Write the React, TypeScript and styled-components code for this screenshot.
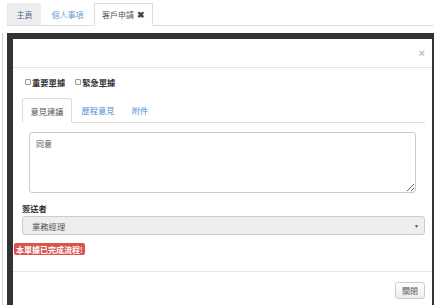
import React from "react";
import styled, { createGlobalStyle, css } from "styled-components";

const GlobalStyle = createGlobalStyle`
  html, body {
    margin: 0;
    padding: 0;
    background: #fff;
  }
  body {
    font-family: "Liberation Sans", "Noto Sans CJK TC", sans-serif;
    color: #333;
  }
`;

const Page = styled.div`
  width: 434px;
  height: 305px;
  overflow: hidden;
  display: flex;
  flex-direction: column;
`;

const TabBar = styled.ul`
  display: flex;
  margin: 3px 0 0 7px;
  padding: 0;
  list-style: none;
  height: 22px;
  border-bottom: 1px solid #ddd;
`;

const Tab = styled.li<{ $w: number; $kind: "home" | "link" | "active" }>`
  width: ${(p) => p.$w}px;
  box-sizing: border-box;
  display: flex;
  align-items: center;
  justify-content: center;
  gap: 3px;
  font-size: 8px;
  ${(p) =>
    p.$kind === "home" &&
    css`
      background: #eee;
      color: #4d6b8c;
      border-left: 1px solid #e6e6e6;
    `}
  ${(p) =>
    p.$kind === "link" &&
    css`
      color: #6a9fd8;
    `}
  ${(p) =>
    p.$kind === "active" &&
    css`
      color: #555;
      background: #fff;
      border: 1px solid #ddd;
      border-bottom-color: #fff;
      height: 23px;
    `}
`;

const CloseMark = styled.span`
  font-size: 9px;
  font-weight: bold;
  color: #444;
`;

const Stage = styled.div`
  flex: 1;
  margin: 7px 0 0 2px;
  border-left: 1px solid #d0d0d0;
  padding-left: 4px;
  display: flex;
`;

const Backdrop = styled.div`
  flex: 1;
  background: #333;
  padding: 6px 2px 0 6px;
  display: flex;
`;

const Modal = styled.div`
  flex: 1;
  background: #fff;
  display: flex;
  flex-direction: column;
`;

const ModalHeader = styled.div`
  height: 28px;
  border-bottom: 1px solid #e5e5e5;
  display: flex;
  justify-content: flex-end;
  align-items: center;
  padding-right: 7px;
`;

const Dismiss = styled.span`
  font-size: 11px;
  color: #bbb;
  font-weight: bold;
  line-height: 1;
`;

const ModalBody = styled.div`
  padding: 0 7px 0 9px;
  display: flex;
  flex-direction: column;
`;

const CheckRow = styled.div`
  display: flex;
  align-items: center;
  height: 12px;
  margin: 8px 0 0 3px;
  gap: 10px;
`;

const CheckLabel = styled.label`
  display: flex;
  align-items: center;
  gap: 1px;
  font-size: 8.3px;
  font-weight: bold;
  color: #333;
`;

const Box = styled.input`
  appearance: none;
  width: 6px;
  height: 6px;
  margin: 0;
  border: 1px solid #999;
  border-radius: 1px;
  background: #f6f6f6;
  box-sizing: border-box;
`;

const NavTabs = styled.div`
  display: flex;
  margin-top: 10px;
  height: 24px;
  border-bottom: 1px solid #ddd;
`;

const NavTab = styled.div<{ $active?: boolean; $w: number }>`
  width: ${(p) => p.$w}px;
  box-sizing: border-box;
  display: flex;
  align-items: center;
  justify-content: center;
  font-size: 8.3px;
  color: ${(p) => (p.$active ? "#555" : "#4a8fd4")};
  ${(p) =>
    p.$active &&
    css`
      background: #fff;
      border: 1px solid #ddd;
      border-bottom-color: #fff;
      border-radius: 3px 3px 0 0;
      height: 25px;
    `}
`;

const Memo = styled.textarea`
  margin: 9px 0 0 7px;
  width: 387px;
  height: 61px;
  box-sizing: border-box;
  border: 1px solid #ccc;
  border-radius: 3px;
  padding: 5px 6px;
  font-family: inherit;
  font-size: 8px;
  color: #555;
  resize: vertical;
`;

const FieldLabel = styled.div`
  margin-top: 9px;
  height: 12px;
  display: flex;
  align-items: center;
  font-size: 8.3px;
  font-weight: bold;
  color: #333;
`;

const Select = styled.div`
  margin-top: 2px;
  height: 19px;
  box-sizing: border-box;
  border: 1px solid #ccc;
  border-radius: 3px;
  background: #eee;
  display: flex;
  align-items: center;
  justify-content: space-between;
  padding: 0 5px 0 9px;
  font-size: 8.3px;
  color: #555;
`;

const Caret = styled.span`
  font-size: 5px;
  color: #444;
`;

const StatusLabel = styled.span`
  align-self: flex-start;
  margin: 8px 0 0 1px;
  height: 12px;
  padding: 0 2px;
  display: flex;
  align-items: center;
  background: #d9534f;
  border-radius: 2px;
  color: #fff;
  font-weight: bold;
  font-size: 8px;
  font-family: "Liberation Serif", "Noto Sans CJK TC", serif;
`;

const ModalFooter = styled.div`
  margin-top: 16px;
  border-top: 1px solid #e5e5e5;
  padding: 10px 7px 0 0;
  display: flex;
  justify-content: flex-end;
`;

const Button = styled.button`
  width: 30px;
  height: 17px;
  padding: 0;
  border: 1px solid #ccc;
  border-radius: 3px;
  background: linear-gradient(#fff, #ececec);
  font-family: inherit;
  font-size: 8px;
  color: #555;
`;

export default function App() {
  return (
    <>
      <GlobalStyle />
      <Page>
        <TabBar>
          <Tab $w={34} $kind="home">主頁</Tab>
          <Tab $w={53} $kind="link">個人事項</Tab>
          <Tab $w={59} $kind="active">
            客戶申請 <CloseMark>✖</CloseMark>
          </Tab>
        </TabBar>
        <Stage>
          <Backdrop>
            <Modal>
              <ModalHeader>
                <Dismiss>×</Dismiss>
              </ModalHeader>
              <ModalBody>
                <CheckRow>
                  <CheckLabel>
                    <Box type="checkbox" />
                    重要單據
                  </CheckLabel>
                  <CheckLabel>
                    <Box type="checkbox" />
                    緊急單據
                  </CheckLabel>
                </CheckRow>
                <NavTabs>
                  <NavTab $active $w={50}>意見建議</NavTab>
                  <NavTab $w={52}>歷程意見</NavTab>
                  <NavTab $w={32}>附件</NavTab>
                </NavTabs>
                <Memo defaultValue="同意" />
                <FieldLabel>簽送者</FieldLabel>
                <Select>
                  <span>業務經理</span>
                  <Caret>▼</Caret>
                </Select>
              </ModalBody>
              <StatusLabel>本單據已完成流程!</StatusLabel>
              <ModalFooter>
                <Button>關閉</Button>
              </ModalFooter>
            </Modal>
          </Backdrop>
        </Stage>
      </Page>
    </>
  );
}
